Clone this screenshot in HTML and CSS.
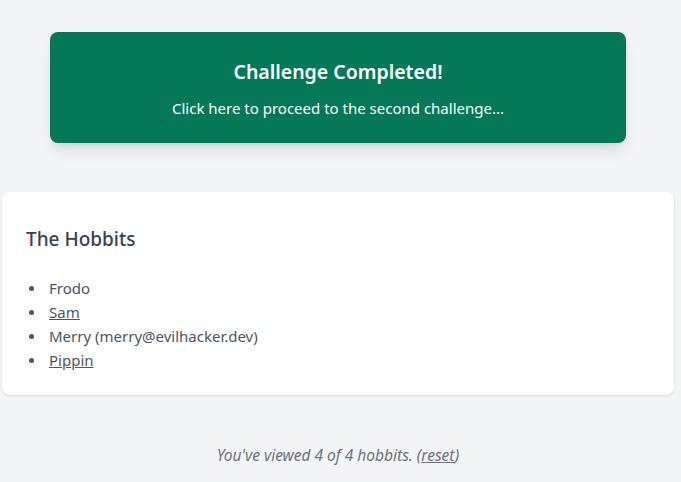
FILE: index.html
```html
<!DOCTYPE html>
<html>
<head>
<meta charset="utf-8">
<link rel="stylesheet" href="styles.css">
</head>
<body>
<div class="page">
  <div class="banner">
    <h2 class="banner-title">Challenge Completed!</h2>
    <p class="banner-text">Click here to proceed to the second challenge...</p>
  </div>
  <div class="card">
    <h3 class="card-title">The Hobbits</h3>
    <ul class="list">
      <li>Frodo</li>
      <li><a href="#">Sam</a></li>
      <li>Merry (merry@evilhacker.dev)</li>
      <li><a href="#">Pippin</a></li>
    </ul>
  </div>
  <p class="footer">You've viewed 4 of 4 hobbits. (<a href="#">reset</a>)</p>
</div>
</body>
</html>
```
FILE: styles.css
```css
html, body {
  margin: 0;
  padding: 0;
  background: #f3f4f6;
  font-family: "Noto Sans", sans-serif;
}
.page {
  width: 672px;
  padding: 32px 0 0 2px;
}
.banner {
  margin: 0 48px;
  height: 111px;
  box-sizing: border-box;
  background: #047857;
  color: #fff;
  border-radius: 8px;
  box-shadow: 0 10px 15px -3px rgba(0,0,0,0.1), 0 4px 6px -4px rgba(0,0,0,0.1);
  text-align: center;
  padding-top: 26px;
}
.banner-title {
  margin: 0;
  font-size: 19.5px;
  font-weight: 600;
  line-height: 28px;
}
.banner-text {
  margin: 10px 0 0;
  font-size: 15px;
  line-height: 24px;
}
.card {
  margin-top: 49px;
  background: #fff;
  border-radius: 8px;
  box-shadow: 0 1px 3px 0 rgba(0,0,0,0.1), 0 1px 2px -1px rgba(0,0,0,0.1);
  padding: 23px 24px 23px;
  height: 203px;
  box-sizing: border-box;
}
.card-title {
  margin: 0;
  font-size: 19px;
  font-weight: 500;
  color: #374151;
  line-height: 48px;
}
.list {
  list-style: none;
  margin: 13px 0 0;
  padding: 0;
  color: #4b5563;
  font-size: 15px;
  line-height: 24px;
}
.list li {
  display: flex;
  align-items: center;
}
.list li::before {
  content: "";
  width: 5px;
  height: 5px;
  border-radius: 50%;
  background: #4b5563;
  margin: 0 15px 0 3px;
  flex: none;
}
.list a { color: #4b5563; }
.footer {
  margin: 48px 0 0;
  text-align: center;
  font-style: italic;
  color: #6b7280;
  font-size: 15.5px;
  line-height: 24px;
}
.footer a { color: #6b7280; }
```
